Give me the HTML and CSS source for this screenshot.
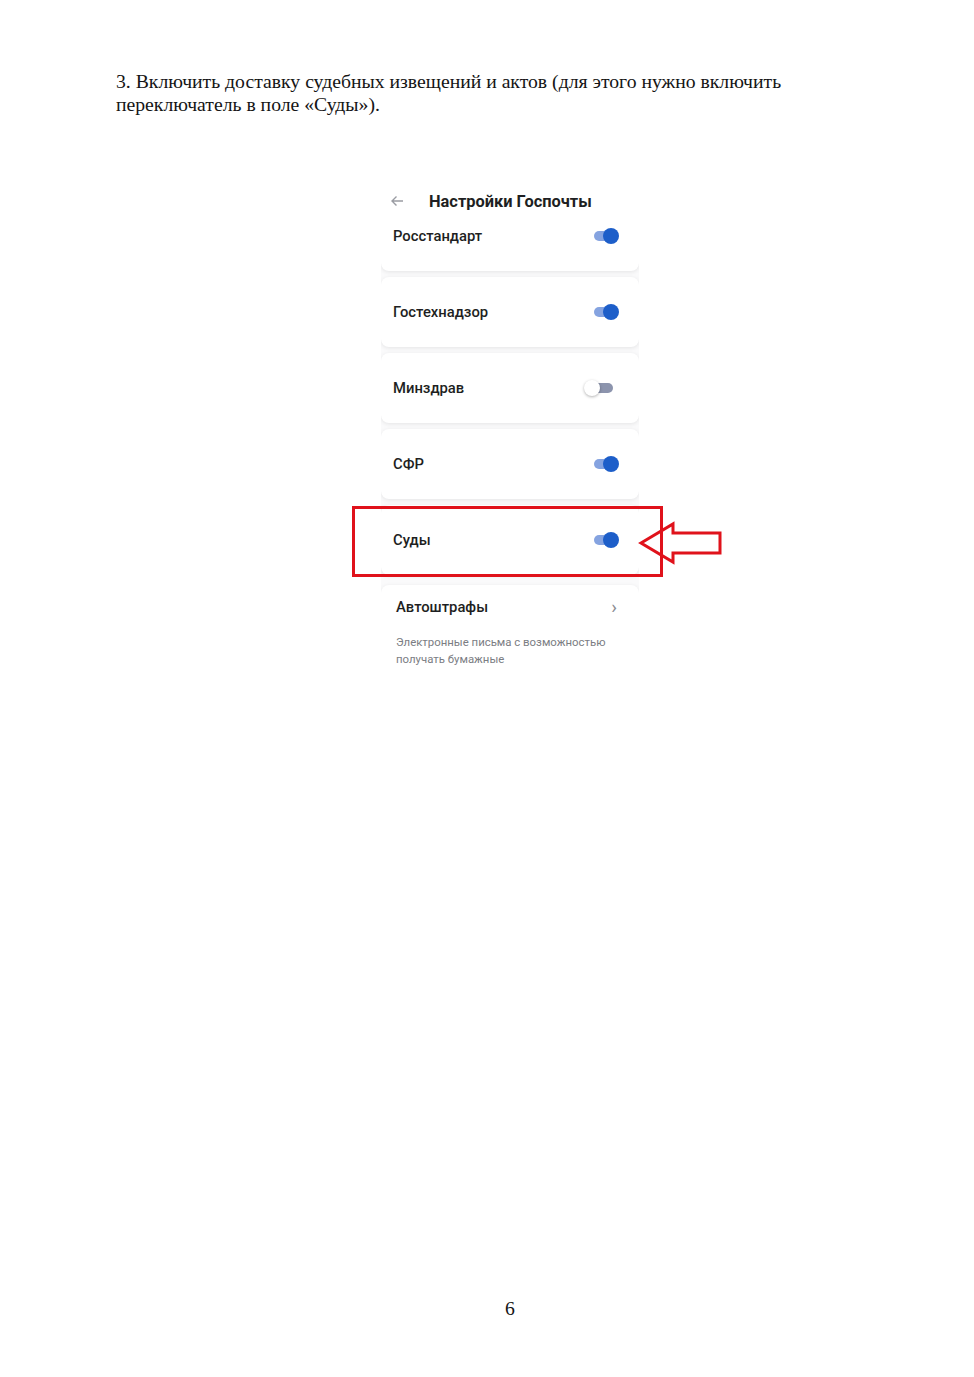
FILE: index.html
```html
<!DOCTYPE html>
<html lang="ru">
<head>
  <meta charset="UTF-8" />
  <meta name="viewport" content="width=device-width, initial-scale=1.0"/>
  <title>Настройки Госпочты — суды</title>
  <link rel="stylesheet" href="styles.css">
</head>
<body>
  <div class="page">
    <p class="step">3. Включить доставку судебных извещений и актов (для этого нужно включить переключатель в поле «Суды»).</p>

    <div class="figure">
      <div class="shot">
        <div class="shot-head">
          <svg class="back" width="14" height="12" viewBox="0 0 14 12">
            <path d="M13 6H2M6.5 1.5L2 6l4.5 4.5" fill="none" stroke="#9a9ca3" stroke-width="1.4"/>
          </svg>
          <span class="shot-title">Настройки Госпочты</span>
        </div>

        <div class="shot-list">
          <div class="cards">
            <div class="card">
              <span class="card-name">Росстандарт</span>
              <span class="toggle on"></span>
            </div>
            <div class="card">
              <span class="card-name">Гостехнадзор</span>
              <span class="toggle on"></span>
            </div>
            <div class="card">
              <span class="card-name">Минздрав</span>
              <span class="toggle off"></span>
            </div>
            <div class="card">
              <span class="card-name">СФР</span>
              <span class="toggle on"></span>
            </div>
            <div class="card">
              <span class="card-name">Суды</span>
              <span class="toggle on"></span>
            </div>
            <div class="card card-link">
              <div class="card-row">
                <span class="card-name">Автоштрафы</span>
                <span class="chevron">›</span>
              </div>
              <div class="card-note">Электронные письма с возможностью получать бумажные</div>
            </div>
          </div>
        </div>
      </div>

      <div class="mark"></div>
      <svg class="pointer" width="90" height="46" viewBox="0 0 90 46">
        <polygon points="5,23 37,4 37,13 84,13 84,33 37,33 37,42" fill="none" stroke="#e0121b" stroke-width="3"/>
      </svg>
    </div>

    <div class="page-num">6</div>
  </div>
</body>
</html>
```

FILE: styles.css
```css
body {
  margin: 0;
  background: #fff;
}

.page {
  box-sizing: border-box;
  height: 1377px;
  padding: 70px 70px 57px 116px;
  display: flex;
  flex-direction: column;
  font-family: "Liberation Serif", "Times New Roman", serif;
  color: #151515;
}

.step {
  margin: 0;
  font-size: 19.7px;
  line-height: 23px;
  max-width: 700px;
}

.figure {
  position: relative;
  width: 258px;
  margin: 70px auto 0;
}

.shot {
  font-family: Roboto, "Noto Sans", sans-serif;
  color: #1e1f22;
}

.shot-head {
  height: 34px;
  padding-bottom: 4px;
  box-sizing: border-box;
  display: flex;
  align-items: center;
  background: #fff;
}

.back {
  margin-left: 9px;
  margin-right: 25px;
}

.shot-title {
  font-size: 16.4px;
  font-weight: 700;
}

.shot-list {
  height: 457px;
  overflow: hidden;
  background: #fafafb;
}

.cards {
  margin-top: -19px;
  display: flex;
  flex-direction: column;
  gap: 6px;
}

.card {
  height: 70px;
  box-sizing: border-box;
  padding: 0 21px 0 12px;
  display: flex;
  align-items: center;
  justify-content: space-between;
  background: #fff;
  border-radius: 8px;
  box-shadow: 0 1px 4px rgba(0, 0, 0, 0.09);
}

.card-name {
  font-size: 14.8px;
  font-weight: 500;
}

.toggle {
  position: relative;
  width: 24px;
  height: 10px;
  border-radius: 5px;
  background: #8c94ad;
}

.toggle::after {
  content: "";
  position: absolute;
  top: -3px;
  left: -5px;
  width: 16px;
  height: 16px;
  border-radius: 50%;
  background: #fff;
  box-shadow: 0 1px 3px rgba(0, 0, 0, 0.3);
}

.toggle.off {
  margin-right: 5px;
}

.toggle.on {
  background: #85a3e0;
}

.toggle.on::after {
  left: auto;
  right: -1px;
  background: #1d5ec9;
  box-shadow: none;
}

.card-link {
  height: 110px;
  margin-top: 4px;
  padding: 13px 22px 0 15px;
  flex-direction: column;
  align-items: stretch;
  justify-content: flex-start;
}

.card-row {
  display: flex;
  justify-content: space-between;
  align-items: center;
}

.card-link .card-name {
  font-size: 14.8px;
}

.chevron {
  color: #8a8c92;
  font-size: 19px;
  line-height: 18px;
}

.card-note {
  margin-top: 18px;
  font-size: 11.4px;
  line-height: 17px;
  color: #7b7d83;
}

.mark {
  position: absolute;
  left: -29px;
  top: 320px;
  width: 311px;
  height: 71px;
  box-sizing: border-box;
  border: 3px solid #e0121b;
}

.pointer {
  position: absolute;
  left: 255px;
  top: 334px;
}

.page-num {
  margin-top: auto;
  text-align: center;
  font-size: 19.7px;
  line-height: 23px;
}
```
